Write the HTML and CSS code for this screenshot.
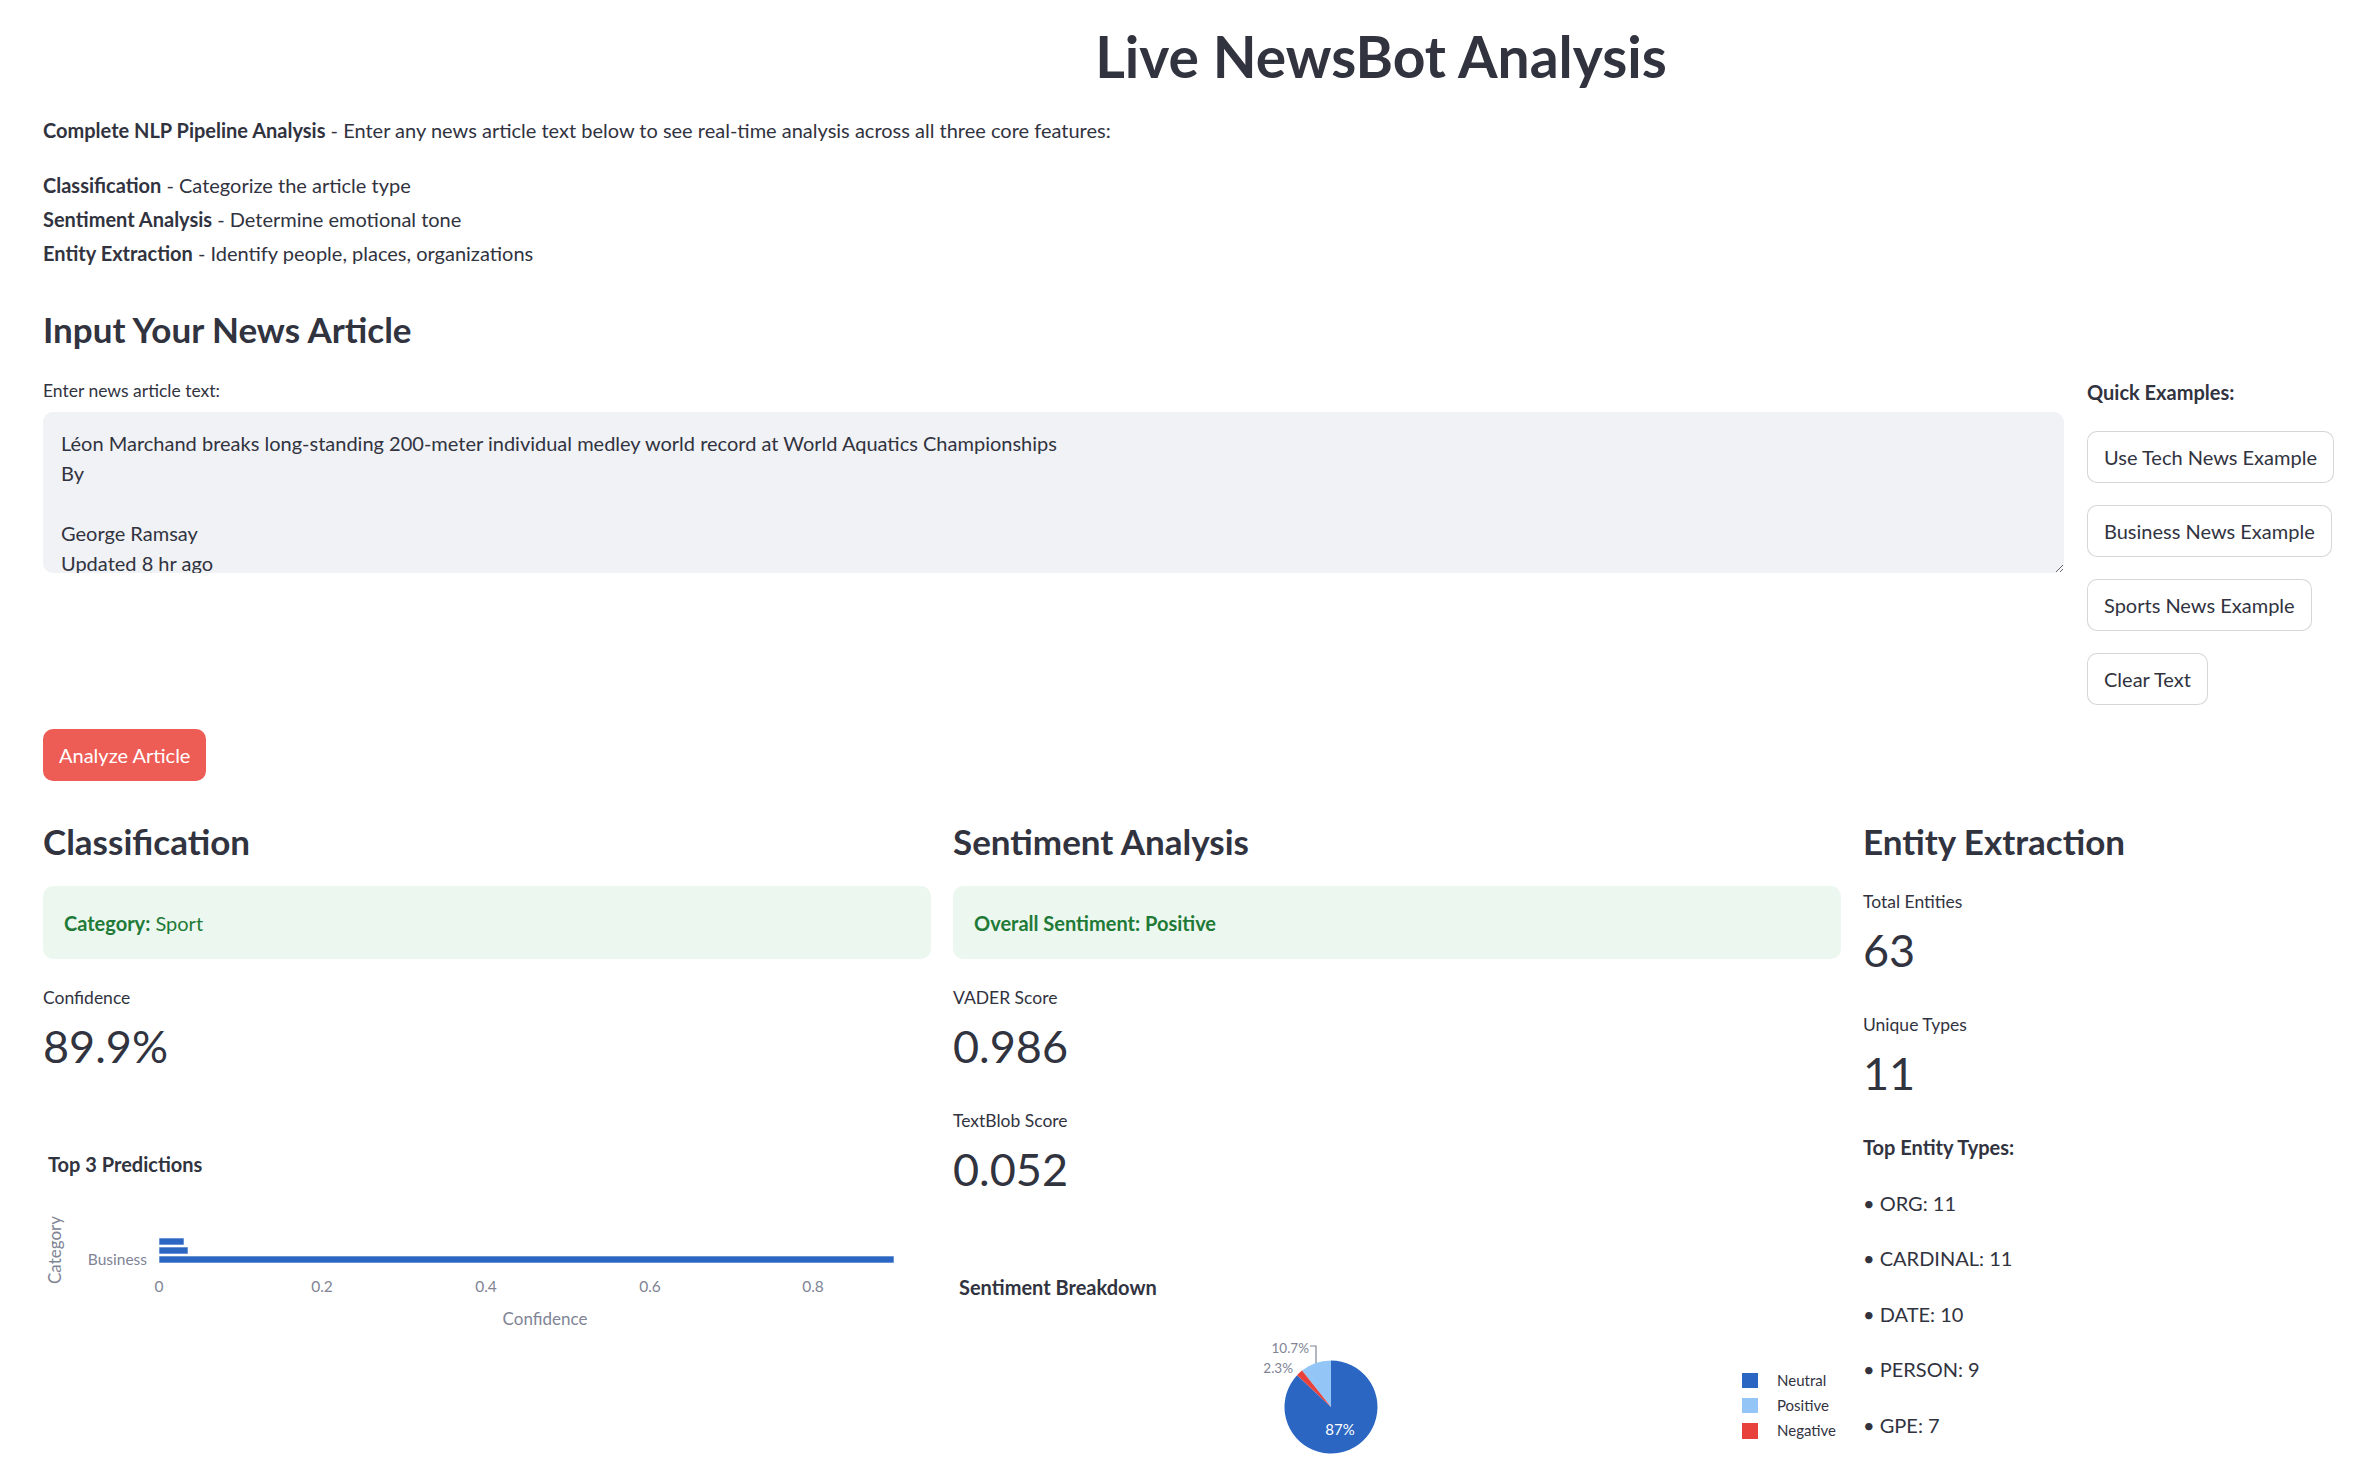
FILE: index.html
```html
<!DOCTYPE html>
<html lang="en">
<head>
<meta charset="utf-8">
<title>Live NewsBot Analysis</title>
<link rel="stylesheet" href="styles.css">
</head>
<body>
<main class="main">
  <h1 class="title">Live NewsBot Analysis</h1>
  <p class="intro"><strong>Complete NLP Pipeline Analysis</strong> - Enter any news article text below to see real-time analysis across all three core features:</p>
  <div class="features">
    <p><strong>Classification</strong> - Categorize the article type</p>
    <p><strong>Sentiment Analysis</strong> - Determine emotional tone</p>
    <p><strong>Entity Extraction</strong> - Identify people, places, organizations</p>
  </div>

  <h3 class="section-title">Input Your News Article</h3>
  <div class="input-row">
    <div class="input-col">
      <label class="field-label" for="article">Enter news article text:</label>
      <textarea id="article" class="article">Léon Marchand breaks long-standing 200-meter individual medley world record at World Aquatics Championships
By

George Ramsay
Updated 8 hr ago</textarea>
    </div>
    <div class="examples">
      <p class="examples-title">Quick Examples:</p>
      <button class="btn">Use Tech News Example</button>
      <button class="btn">Business News Example</button>
      <button class="btn">Sports News Example</button>
      <button class="btn">Clear Text</button>
    </div>
  </div>

  <button class="analyze">Analyze Article</button>

  <div class="results">
    <section class="col">
      <h3 class="col-title">Classification</h3>
      <div class="success"><strong>Category:</strong>&nbsp;Sport</div>
      <div class="metric metric-first">
        <div class="metric-label">Confidence</div>
        <div class="metric-value">89.9%</div>
      </div>
      <svg class="chart chart-bar" width="888" height="260" viewBox="0 0 888 260">
        <text class="chart-title" x="5" y="52">Top 3 Predictions</text>
        <text class="axis-title" transform="translate(18 130) rotate(-90)" text-anchor="middle">Category</text>
        <text class="tick" x="104" y="145" text-anchor="end">Business</text>
        <rect class="bar" x="116" y="118" width="25" height="7"></rect>
        <rect class="bar" x="116" y="127" width="29" height="7"></rect>
        <rect class="bar" x="116" y="136" width="735" height="7"></rect>
        <text class="tick" x="116" y="172" text-anchor="middle">0</text>
        <text class="tick" x="279" y="172" text-anchor="middle">0.2</text>
        <text class="tick" x="443" y="172" text-anchor="middle">0.4</text>
        <text class="tick" x="607" y="172" text-anchor="middle">0.6</text>
        <text class="tick" x="770" y="172" text-anchor="middle">0.8</text>
        <text class="axis-title" x="502" y="205" text-anchor="middle">Confidence</text>
      </svg>
    </section>

    <section class="col">
      <h3 class="col-title">Sentiment Analysis</h3>
      <div class="success"><strong>Overall Sentiment: Positive</strong></div>
      <div class="metric metric-first">
        <div class="metric-label">VADER Score</div>
        <div class="metric-value">0.986</div>
      </div>
      <div class="metric">
        <div class="metric-label">TextBlob Score</div>
        <div class="metric-value">0.052</div>
      </div>
      <svg class="chart chart-pie" width="888" height="240" viewBox="0 0 888 240">
        <text class="chart-title" x="6" y="54">Sentiment Breakdown</text>
        <path class="slice-neutral" d="M378,166 L344.10,134.17 A46.5,46.5 0 1 0 378,119.5 Z"></path>
        <path class="slice-positive" d="M378,166 L378,119.5 A46.5,46.5 0 0 0 349.03,129.62 Z"></path>
        <path class="slice-negative" d="M378,166 L349.03,129.62 A46.5,46.5 0 0 0 344.10,134.17 Z"></path>
        <text class="pie-in" x="387" y="194" text-anchor="middle">87%</text>
        <text class="pie-out" x="356" y="112" text-anchor="end">10.7%</text>
        <polyline class="leader" points="357,105 363,105 363,122"></polyline>
        <text class="pie-out" x="340" y="132" text-anchor="end">2.3%</text>
        <rect class="swatch-neutral" x="789" y="132" width="16" height="15"></rect>
        <text class="legend" x="824" y="145">Neutral</text>
        <rect class="swatch-positive" x="789" y="157" width="16" height="15"></rect>
        <text class="legend" x="824" y="170">Positive</text>
        <rect class="swatch-negative" x="789" y="182" width="16" height="16"></rect>
        <text class="legend" x="824" y="195">Negative</text>
      </svg>
    </section>

    <section class="col">
      <h3 class="col-title">Entity Extraction</h3>
      <div class="metric metric-entity">
        <div class="metric-label">Total Entities</div>
        <div class="metric-value">63</div>
      </div>
      <div class="metric">
        <div class="metric-label">Unique Types</div>
        <div class="metric-value">11</div>
      </div>
      <p class="entity-head"><strong>Top Entity Types:</strong></p>
      <p class="entity-item">• ORG: 11</p>
      <p class="entity-item">• CARDINAL: 11</p>
      <p class="entity-item">• DATE: 10</p>
      <p class="entity-item">• PERSON: 9</p>
      <p class="entity-item">• GPE: 7</p>
    </section>
  </div>
</main>
</body>
</html>
```

FILE: styles.css
```css
html, body {
  margin: 0;
  padding: 0;
  overflow: hidden;
  background: #ffffff;
}

body {
  font-family: Lato, "Noto Sans", sans-serif;
  color: #31333f;
}

.main {
  width: 2708px;
  margin-left: 43px;
}

.title {
  margin: 23px 0 0;
  padding-right: 32px;
  font-size: 57px;
  line-height: 67px;
  font-weight: 700;
  text-align: center;
}

.intro {
  margin: 23px 0 0;
  font-size: 20px;
  line-height: 34px;
}

.features {
  margin-top: 21px;
}

.features p {
  margin: 0;
  font-size: 20px;
  line-height: 34px;
}

.section-title {
  margin: 37px 0 0;
  font-size: 35px;
  line-height: 44px;
  font-weight: 700;
}

.input-row {
  display: grid;
  grid-template-columns: 2021px 1fr;
  column-gap: 23px;
  margin-top: 24px;
  align-items: start;
}

.field-label {
  display: block;
  margin-top: 4px;
  font-size: 17.5px;
  line-height: 24px;
}

.article {
  display: block;
  box-sizing: border-box;
  width: 100%;
  height: 161px;
  margin-top: 9px;
  padding: 16px 18px;
  border: none;
  border-radius: 10px;
  background: #f0f2f6;
  color: #31333f;
  font-family: Lato, "Noto Sans", sans-serif;
  font-size: 20px;
  line-height: 30px;
  overflow: hidden;
  resize: vertical;
  outline: none;
}

.examples {
  display: flex;
  flex-direction: column;
  align-items: flex-start;
  gap: 22px;
}

.examples-title {
  margin: 0;
  font-size: 20px;
  line-height: 34px;
  font-weight: 700;
}

.btn {
  box-sizing: border-box;
  height: 52px;
  padding: 0 16px;
  border: 1px solid rgba(49, 51, 63, 0.2);
  border-radius: 10px;
  background: #ffffff;
  color: #31333f;
  font-family: Lato, "Noto Sans", sans-serif;
  font-size: 20px;
}

.analyze {
  display: block;
  box-sizing: border-box;
  height: 52px;
  margin-top: 24px;
  padding: 0 16px;
  border: none;
  border-radius: 10px;
  background: #ee5c56;
  color: #ffffff;
  font-family: Lato, "Noto Sans", sans-serif;
  font-size: 20px;
}

.results {
  display: grid;
  grid-template-columns: repeat(3, 888px);
  column-gap: 22px;
  margin-top: 38px;
  align-items: start;
}

.col-title {
  margin: 0;
  font-size: 35px;
  line-height: 44px;
  font-weight: 700;
}

.success {
  box-sizing: border-box;
  display: flex;
  align-items: center;
  height: 73px;
  margin-top: 23px;
  padding: 0 21px;
  border-radius: 10px;
  background: #ecf8ef;
  color: #1f7a37;
  font-size: 20px;
}

.metric {
  margin-top: 35px;
}

.metric-first {
  margin-top: 27px;
}

.metric-entity {
  margin-top: 27px;
}

.metric-label {
  font-size: 17.5px;
  line-height: 24px;
}

.metric-value {
  margin-top: 8px;
  font-size: 45px;
  line-height: 56px;
}

.chart {
  display: block;
  overflow: visible;
}

.chart-bar {
  margin-top: 46px;
}

.chart-pie {
  margin-top: 44px;
}

.chart text {
  font-family: Lato, "Noto Sans", sans-serif;
}

.chart .chart-title {
  font-size: 20px;
  font-weight: 700;
  fill: #31333f;
}

.chart .axis-title {
  font-size: 17px;
  fill: #808495;
}

.chart .tick {
  font-size: 15.5px;
  fill: #808495;
}

.bar {
  fill: #2a66c2;
  stroke: rgba(255, 255, 255, 0.6);
  stroke-width: 1;
}

.slice-neutral,
.swatch-neutral {
  fill: #2a66c2;
}

.slice-positive,
.swatch-positive {
  fill: #93c6f6;
}

.slice-negative,
.swatch-negative {
  fill: #e8413c;
}

.chart .pie-in {
  font-size: 15px;
  fill: #ffffff;
}

.chart .pie-out {
  font-size: 13.5px;
  fill: #808495;
}

.leader {
  fill: none;
  stroke: #808495;
  stroke-width: 1.2;
}

.chart .legend {
  font-size: 15px;
  fill: #31333f;
}

.entity-head {
  margin: 29px 0 0;
  font-size: 20px;
  line-height: 34px;
}

.entity-item {
  margin: 21.5px 0 0;
  font-size: 20px;
  line-height: 34px;
}
```
